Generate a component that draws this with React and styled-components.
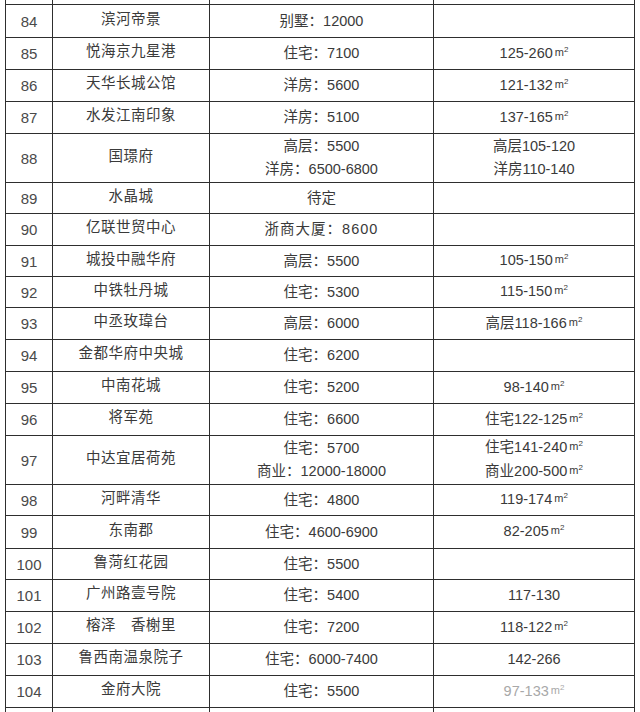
import React from 'react';
import styled, { createGlobalStyle } from 'styled-components';

const GlobalStyle = createGlobalStyle`
  html, body {
    margin: 0;
    padding: 0;
    background: #fff;
    overflow: hidden;
  }
`;

// price / area lines; a trailing ㎡ is drawn as a small m²
const rows = [
  { no: '', name: '', price: [], area: [], h: 5 },
  { no: 84, name: '滨河帝景', price: ['别墅：12000'], area: [], h: 33 },
  { no: 85, name: '悦海京九星港', price: ['住宅：7100'], area: ['125-260㎡'], h: 32 },
  { no: 86, name: '天华长城公馆', price: ['洋房：5600'], area: ['121-132㎡'], h: 32 },
  { no: 87, name: '水发江南印象', price: ['洋房：5100'], area: ['137-165㎡'], h: 32 },
  { no: 88, name: '国璟府', price: ['高层：5500', '洋房：6500-6800'], area: ['高层105-120', '洋房110-140'], h: 49 },
  { no: 89, name: '水晶城', price: ['待定'], area: [], h: 31 },
  { no: 90, name: '亿联世贸中心', price: ['浙商大厦：8600'], area: [], h: 32, wide: true },
  { no: 91, name: '城投中融华府', price: ['高层：5500'], area: ['105-150㎡'], h: 31 },
  { no: 92, name: '中铁牡丹城', price: ['住宅：5300'], area: ['115-150㎡'], h: 31 },
  { no: 93, name: '中丞玫瑋台', price: ['高层：6000'], area: ['高层118-166㎡'], h: 32 },
  { no: 94, name: '金都华府中央城', price: ['住宅：6200'], area: [], h: 32 },
  { no: 95, name: '中南花城', price: ['住宅：5200'], area: ['98-140㎡'], h: 32 },
  { no: 96, name: '将军苑', price: ['住宅：6600'], area: ['住宅122-125㎡'], h: 32 },
  { no: 97, name: '中达宜居荷苑', price: ['住宅：5700', '商业：12000-18000'], area: ['住宅141-240㎡', '商业200-500㎡'], h: 49 },
  { no: 98, name: '河畔清华', price: ['住宅：4800'], area: ['119-174㎡'], h: 31 },
  { no: 99, name: '东南郡', price: ['住宅：4600-6900'], area: ['82-205㎡'], h: 33 },
  { no: 100, name: '鲁菏红花园', price: ['住宅：5500'], area: [], h: 31 },
  { no: 101, name: '广州路壹号院', price: ['住宅：5400'], area: ['117-130'], h: 32 },
  { no: 102, name: '榕泽　香榭里', price: ['住宅：7200'], area: ['118-122㎡'], h: 32 },
  { no: 103, name: '鲁西南温泉院子', price: ['住宅：6000-7400'], area: ['142-266'], h: 32 },
  { no: 104, name: '金府大院', price: ['住宅：5500'], area: ['97-133㎡'], h: 32, faded: true },
  { no: '', name: '', price: [], area: [], h: 32 },
];

function Line({ text }) {
  if (text.endsWith('㎡')) {
    return (
      <div>
        {text.slice(0, -1)}
        <Unit>m<sup>2</sup></Unit>
      </div>
    );
  }
  return <div>{text}</div>;
}

export default function App() {
  return (
    <Page>
      <GlobalStyle />
      <Table>
        {rows.map((r, i) => (
          <Row key={i} $h={r.h}>
            <NoCell>{r.no}</NoCell>
            <NameCell>{r.name}</NameCell>
            <Cell $wide={r.wide}>
              {r.price.map((t, j) => <Line key={j} text={t} />)}
            </Cell>
            <Cell $faded={r.faded}>
              {r.area.map((t, j) => <Line key={j} text={t} />)}
            </Cell>
          </Row>
        ))}
      </Table>
    </Page>
  );
}

const Page = styled.div`
  width: 640px;
  height: 712px;
  overflow: hidden;
  padding-left: 5px;
  box-sizing: border-box;
  font-family: 'Liberation Sans', 'Noto Sans CJK SC', sans-serif;
  color: #3a3a3a;
`;

const Table = styled.div`
  width: 630px;
  border-left: 1px solid #2e2e2e;
  box-sizing: border-box;
`;

const Row = styled.div`
  display: grid;
  grid-template-columns: 47px 157px 224px 201px;
  height: ${p => p.$h}px;
`;

const Cell = styled.div`
  display: flex;
  flex-direction: column;
  align-items: center;
  justify-content: center;
  box-sizing: border-box;
  border-right: 1px solid #2e2e2e;
  border-bottom: 1px solid #2e2e2e;
  font-size: 14.5px;
  line-height: 23px;
  white-space: nowrap;
  overflow: hidden;
  color: ${p => (p.$faded ? '#a8a8a8' : 'inherit')};
  letter-spacing: ${p => (p.$wide ? '1px' : '0')};
`;

const NoCell = styled(Cell)`
  font-size: 15px;
  color: #4a4a4a;
`;

const NameCell = styled(Cell)`
  padding-bottom: 4px;
  letter-spacing: 0.5px;
`;

const Unit = styled.span`
  font-size: 11px;
  margin-left: 2px;
  position: relative;
  top: -2px;

  sup {
    font-size: 8px;
    vertical-align: top;
    position: relative;
    top: -2px;
  }
`;
